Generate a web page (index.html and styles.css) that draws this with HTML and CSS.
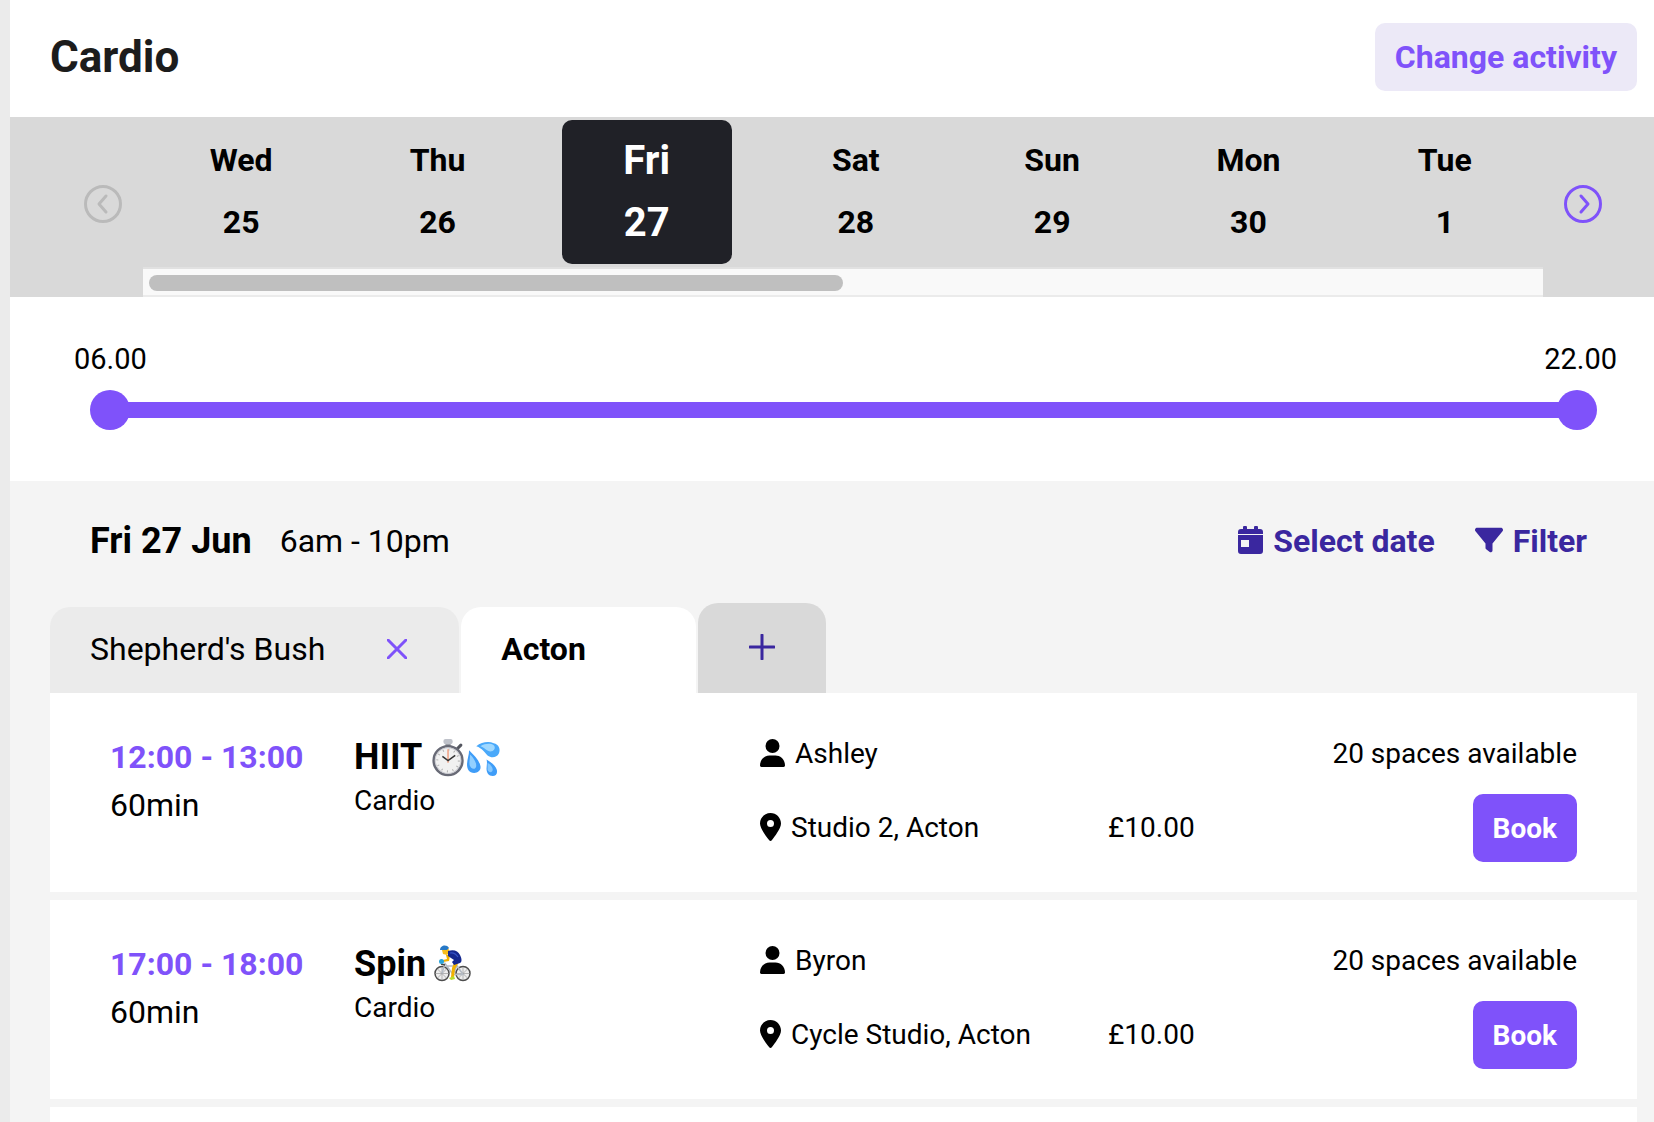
FILE: index.html
```html
<!DOCTYPE html>
<html lang="en">
<head>
    <meta charset="UTF-8">
    <meta name="viewport" content="width=device-width, initial-scale=1.0">
    <title>Cardio</title>
    <link rel="stylesheet" href="styles.css">
</head>
<body>
    <!-- shared icons -->
    <svg class="sprite" aria-hidden="true">
        <symbol id="icon-user" viewBox="0 0 25 28">
            <circle cx="12.5" cy="7" r="7"/>
            <path d="M0 26.600C0 20.500 4.500 16.500 9.500 16.500h6C20.500 16.500 25 20.500 25 26.600c0 .9-.6 1.400-1.400 1.400H1.400C.6 28 0 27.500 0 26.600z"/>
        </symbol>
        <symbol id="icon-pin" viewBox="0 0 384 512">
            <path d="M215.700 499.200C267 435 384 279.400 384 192 384 86 298 0 192 0S0 86 0 192c0 87.400 117 243 168.300 307.200 12.300 15.300 35.100 15.300 47.400 0zM192 128a64 64 0 1 1 0 128 64 64 0 1 1 0-128z"/>
        </symbol>
    </svg>

    <div class="page">
        <header class="header">
            <h1>Cardio</h1>
            <button class="btn-change" type="button">Change activity</button>
        </header>

        <nav class="dates" aria-label="Dates">
            <button class="arrow" type="button" aria-label="Previous week" disabled>
                <svg viewBox="0 0 38 38"><circle cx="19" cy="19" r="17.500"/><path d="M22 11l-7 8 7 8"/></svg>
            </button>
            <div class="days-wrap">
                <div class="days">
                    <button class="day" type="button"><span>Wed</span><span>25</span></button>
                    <button class="day" type="button"><span>Thu</span><span>26</span></button>
                    <button class="day active" type="button"><span>Fri</span><span>27</span></button>
                    <button class="day" type="button"><span>Sat</span><span>28</span></button>
                    <button class="day" type="button"><span>Sun</span><span>29</span></button>
                    <button class="day" type="button"><span>Mon</span><span>30</span></button>
                    <button class="day" type="button"><span>Tue</span><span>1</span></button>
                </div>
                <div class="scrollbar"><div class="thumb"></div></div>
            </div>
            <button class="arrow" type="button" aria-label="Next week">
                <svg viewBox="0 0 38 38"><circle cx="19" cy="19" r="17.500"/><path d="M17 11l7 8-7 8"/></svg>
            </button>
        </nav>

        <section class="time-range">
            <div class="range-labels">
                <label for="from">06.00</label>
                <label for="to">22.00</label>
            </div>
            <div class="range">
                <input id="from" type="range" min="6" max="22" value="6">
                <input id="to" type="range" min="6" max="22" value="22">
            </div>
        </section>

        <main class="timetable">
            <div class="summary">
                <h2>Fri 27 Jun</h2>
                <span class="hours">6am - 10pm</span>
                <div class="actions">
                    <button class="action" type="button">
                        <svg width="25" height="28" viewBox="0 0 25 28">
                            <path d="M0 8V6q0-3 3-3h2V1.500a1.500 1.500 0 0 1 4 0V3h7V1.500a1.500 1.500 0 0 1 4 0V3h2q3 0 3 3v2z"/>
                            <path fill-rule="evenodd" d="M0 9h25v16q0 3-3 3H3q-3 0-3-3zM3 14h8v7H3z"/>
                        </svg>
                        Select date
                    </button>
                    <button class="action" type="button">
                        <svg width="28" height="28" viewBox="0 0 512 512">
                            <path d="M3.900 54.900C10.500 40.900 24.500 32 40 32h432c15.500 0 29.500 8.900 36.100 22.900s4.600 30.500-5.200 42.500L320 320.900V448c0 12.100-6.800 23.200-17.700 28.600s-23.800 4.300-33.500-3l-64-48c-8.100-6-12.800-15.500-12.800-25.600v-79.100L9 97.300C-.7 85.400-2.800 68.800 3.900 54.900z"/>
                        </svg>
                        Filter
                    </button>
                </div>
            </div>

            <div class="tabs">
                <div class="tab">
                    <a href="#">Shepherd's Bush</a>
                    <button class="close" type="button" aria-label="Close Shepherd's Bush">
                        <svg width="20" height="20" viewBox="0 0 20 20"><path d="M1 1l18 18M19 1L1 19"/></svg>
                    </button>
                </div>
                <div class="tab active"><a href="#">Acton</a></div>
                <button class="tab-add" type="button" aria-label="Add a location">
                    <svg width="26" height="26" viewBox="0 0 26 26"><path d="M13 1v24M1 13h24"/></svg>
                </button>
            </div>

            <ul class="classes">
                <li class="class-card">
                    <div class="when">
                        <strong>12:00 - 13:00</strong>
                        <span>60min</span>
                    </div>
                    <div class="what">
                        <h3>HIIT
                            <svg width="72" height="39" viewBox="-2 0 70 38" role="img" aria-label="stopwatch, sweat drops">
                                <!-- stopwatch -->
                                <rect x="13" y="3" width="5" height="6" fill="#8d9097"/>
                                <rect x="11" y="1" width="9" height="5" rx="2" fill="#bfc2ca"/>
                                <path d="M25 10l3-3" stroke="#54565f" stroke-width="3" stroke-linecap="round"/>
                                <circle cx="15.500" cy="22" r="14" fill="#f1f1f1" stroke="#686a76" stroke-width="2.500"/>
                                <circle cx="15.500" cy="22" r="12.500" fill="none" stroke="#c9cad0" stroke-width="1"/>
                                <circle cx="15.500" cy="22" r="10.500" fill="none" stroke="#b3b3b3" stroke-width="2" stroke-dasharray="1 4.500"/>
                                <path d="M15.500 24V11" stroke="#f0a184" stroke-width="1.500"/>
                                <path d="M10 18l5.500 4 7-5" fill="none" stroke="#333" stroke-width="1.500"/>
                                <!-- drops -->
                                <path d="M43 8C48 4 55 3 60 5c5 1 7 6 5 10-2 4-7 5-11 2-3-3-5-7-11-9z" fill="#4aa9fa"/>
                                <path d="M47 8c5-3 10-3 13-1 2 2 1 5-2 6-4 1-7-4-11-5z" fill="#9fd8ff"/>
                                <path d="M36 12c5 5 10 10 11 15 1 4-2 7-6 7-5 0-7-4-7-8 0-5 2-9 2-14z" fill="#3f9df8"/>
                                <path d="M37 16c3 3 6 7 6 11 0 3-3 4-5 2-3-3-1-8-1-13z" fill="#93d0ff"/>
                                <path d="M53 21c5 3 9 6 10 10 1 4-1 6-4 6-4 0-6-3-6-7 0-3 1-6 0-9z" fill="#3f9df8"/>
                                <path d="M54 24c3 2 5 4 5 7s-4 3-5 0c0-2 0-4 0-7z" fill="#86c9ff"/>
                            </svg>
                        </h3>
                        <p>Cardio</p>
                    </div>
                    <p class="detail staff"><svg width="25" height="28"><use href="#icon-user"/></svg>Ashley</p>
                    <p class="detail place"><svg width="21" height="28"><use href="#icon-pin"/></svg>Studio 2, Acton</p>
                    <p class="price">£10.00</p>
                    <p class="spaces">20 spaces available</p>
                    <button class="btn-book" type="button">Book</button>
                </li>
                <li class="class-card">
                    <div class="when">
                        <strong>17:00 - 18:00</strong>
                        <span>60min</span>
                    </div>
                    <div class="what">
                        <h3>Spin
                            <svg width="38" height="38" viewBox="0 0 38 38" role="img" aria-label="cyclist">
                                <!-- bike -->
                                <g fill="#ededed" stroke="#4d4d4d" stroke-width="1.500">
                                    <circle cx="8" cy="28.500" r="7"/>
                                    <circle cx="29" cy="28.500" r="7"/>
                                </g>
                                <path d="M8 22v13M1.500 28.500h13M3.500 24l9 9M12.500 24l-9 9M29 22v13M22.500 28.500h13M24.500 24l9 9M33.500 24l-9 9" stroke="#9b9b9b" stroke-width=".7"/>
                                <path d="M8 28.500l3-10 8 11h10l-6-9-4 9M12 21h10" fill="none" stroke="#b4bbc4" stroke-width="1.500"/>
                                <path d="M7 19l4 1" stroke="#444" stroke-width="1.500"/>
                                <!-- rider -->
                                <path d="M20 18l5-1-4 7-1 8h-3l1-9z" fill="#f2b200"/>
                                <path d="M15 33l5-2 1 3-4 1z" fill="#b8dc2e"/>
                                <path d="M8 5l6-2 2 4-3 3-4-1z" fill="#f8bd1c"/>
                                <path d="M12 10h4l-1 6-6 1v-2l4-1z" fill="#f2b200"/>
                                <path d="M14 6c6-2 10 0 12 4s2 7 0 8l-6 2-2-3 2-2-6-4z" fill="#14278f"/>
                                <path d="M16 8c4-1 6 1 8 4" fill="none" stroke="#3451c5" stroke-width="1.200"/>
                                <path d="M6 5c0-5 7-6 9-2l-2 2z" fill="#2778c6"/>
                                <circle cx="7.500" cy="16.500" r="2.500" fill="#2ca4d8"/>
                            </svg>
                        </h3>
                        <p>Cardio</p>
                    </div>
                    <p class="detail staff"><svg width="25" height="28"><use href="#icon-user"/></svg>Byron</p>
                    <p class="detail place"><svg width="21" height="28"><use href="#icon-pin"/></svg>Cycle Studio, Acton</p>
                    <p class="price">£10.00</p>
                    <p class="spaces">20 spaces available</p>
                    <button class="btn-book" type="button">Book</button>
                </li>
                <li class="class-card-empty"></li>
            </ul>
        </main>
    </div>
</body>
</html>
```
FILE: styles.css
```css
* {
    box-sizing: border-box;
}

body {
    margin: 0;
    font-family: Roboto, "Liberation Sans", sans-serif;
    font-size: 28px;
    line-height: 40px;
    color: #000;
    background-color: #ebebeb;
}

h1, h2, h3, p, ul {
    margin: 0;
    padding: 0;
}

button {
    font-family: inherit;
    border: none;
    padding: 0;
    background: none;
    color: inherit;
    cursor: pointer;
}

a {
    color: inherit;
    text-decoration: none;
}

.sprite {
    display: none;
}

.page {
    display: flex;
    flex-direction: column;
    min-height: 100vh;
    margin-left: 10px;
    background-color: #fff;
}

/* header */
.header {
    display: flex;
    justify-content: space-between;
    align-items: center;
    padding: 23px 17px 26px 40px;
}

.header h1 {
    font-size: 44px;
    color: #1c1c1c;
}

.btn-change {
    height: 68px;
    padding: 0 20px;
    border-radius: 10px;
    background-color: #ece9f7;
    color: #7f52fa;
    font-size: 32px;
    font-weight: bold;
}

/* dates */
.dates {
    display: flex;
    justify-content: space-between;
    background-color: #d9d9d9;
}

.arrow {
    width: 38px;
    color: #7f52fa;
    margin: 0 52px 6px 21px;
}

.arrow:first-child {
    margin: 0 21px 6px 74px;
}

.arrow:disabled {
    color: #bababa;
}

.arrow svg {
    display: block;
    width: 38px;
    height: 38px;
    fill: none;
    stroke: currentColor;
    stroke-width: 3;
    stroke-linecap: round;
    stroke-linejoin: round;
}

.days-wrap {
    flex: 1;
}

.days {
    display: flex;
    padding: 3px 0;
}

.day {
    flex: 1;
    padding: 9px 0 11px;
    font-size: 32px;
    font-weight: bold;
    line-height: 62px;
}

.day span {
    display: block;
}

.day.active {
    flex: none;
    width: 170px;
    margin: 0 26px;
    padding: 10px 0;
    border-radius: 10px;
    background-color: #202127;
    color: #fff;
    font-size: 40px;
}

.scrollbar {
    height: 30px;
    padding: 6px;
    background-color: #f9f9f9;
    border-top: 2px solid #e1e1e1;
    border-bottom: 2px solid #ebebeb;
}

.thumb {
    width: 50%;
    height: 16px;
    border-radius: 8px;
    background-color: #bfbfbf;
}

/* time range */
.time-range {
    padding: 42px 37px 51px 64px;
}

.range-labels {
    display: flex;
    justify-content: space-between;
    margin-bottom: 11px;
    font-size: 29px;
}

.range {
    position: relative;
    height: 40px;
    margin: 0 20px 0 16px;
    background: linear-gradient(#7f52fa, #7f52fa) center / calc(100% - 20px) 16px no-repeat;
}

.range input {
    position: absolute;
    inset: 0;
    width: 100%;
    height: 40px;
    margin: 0;
    background: none;
    appearance: none;
    pointer-events: none;
}

.range input::-webkit-slider-thumb {
    appearance: none;
    width: 40px;
    height: 40px;
    border-radius: 50%;
    background-color: #7f52fa;
    pointer-events: auto;
}

/* timetable */
.timetable {
    display: flex;
    flex-direction: column;
    flex: 1;
    padding: 40px 17px 0 40px;
    background-color: #f4f4f4;
}

.summary {
    display: flex;
    align-items: center;
    gap: 28px;
    padding: 0 50px 42px 40px;
}

.summary h2 {
    font-size: 36px;
}

.hours {
    font-size: 32px;
}

.actions {
    display: flex;
    gap: 40px;
    margin-left: auto;
}

.action {
    display: flex;
    align-items: center;
    gap: 10px;
    font-size: 32px;
    font-weight: bold;
    color: #3a279f;
}

.action svg {
    margin-bottom: 2px;
    fill: currentColor;
}

.tabs {
    display: flex;
    align-items: flex-end;
    gap: 2px;
    font-size: 32px;
}

.tab {
    display: flex;
    align-items: center;
    height: 86px;
    padding: 0 40px 2px;
    border-radius: 20px 20px 0 0;
    background-color: #ebebeb;
}

.tab.active {
    width: 235px;
    font-weight: bold;
    background-color: #fff;
}

.close {
    display: flex;
    margin-left: 62px;
    margin-right: 12px;
    color: #7f52fa;
}

.close svg,
.tab-add svg {
    fill: none;
    stroke: currentColor;
    stroke-width: 3;
    stroke-linecap: round;
}

.tab-add {
    width: 128px;
    height: 90px;
    border-radius: 20px 20px 0 0;
    background-color: #d9d9d9;
    color: #3a279f;
}

.classes {
    display: flex;
    flex-direction: column;
    flex: 1;
    gap: 8px;
    list-style: none;
}

.class-card {
    display: grid;
    grid-template-columns: 244px 406px 348px 1fr;
    grid-template-rows: 42px 68px;
    row-gap: 19px;
    align-items: center;
    padding: 40px 60px 30px;
    background-color: #fff;
}

.class-card-empty {
    flex: 1;
    background-color: #fff;
}

.when,
.what {
    grid-row: 1 / 3;
    align-self: start;
}

.when {
    font-size: 32px;
    line-height: 48px;
}

.when strong,
.when span {
    display: block;
}

.when strong {
    color: #7f52fa;
}

.what h3 {
    display: flex;
    align-items: center;
    gap: 8px;
    font-size: 36px;
    line-height: 48px;
}

.detail {
    display: flex;
    align-items: center;
    gap: 10px;
    grid-column: 3;
}

.detail svg {
    margin-bottom: 2px;
}

.place,
.price,
.btn-book {
    grid-row: 2;
}

.price {
    grid-column: 4;
}

.spaces {
    grid-column: 4;
    grid-row: 1;
    text-align: right;
}

.btn-book {
    grid-column: 4;
    justify-self: end;
    height: 68px;
    padding: 0 20px;
    border-radius: 10px;
    background-color: #7f52fa;
    color: #fff;
    font-size: 28px;
    font-weight: bold;
}
```
